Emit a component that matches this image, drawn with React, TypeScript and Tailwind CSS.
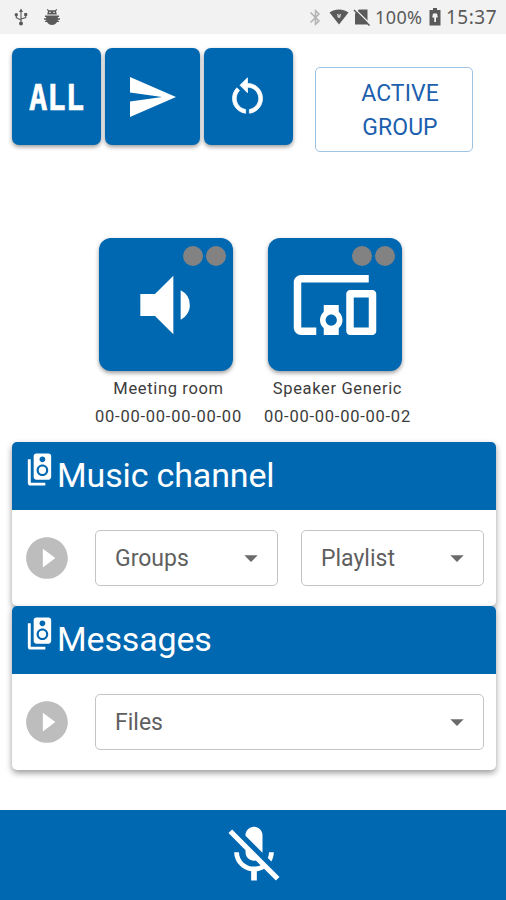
import type { ReactNode } from "react";
import {
  MdArrowDropDown,
  MdBluetooth,
  MdDevicesOther,
  MdMicOff,
  MdPlayCircleFilled,
  MdSpeakerGroup,
  MdVolumeDown,
} from "react-icons/md";

function StatusBar() {
  return (
    <header className="flex h-[34px] items-center bg-[#f2f2f2] pl-[14px] pr-[8px] text-[#5a5a5a]">
      <svg width="14" height="18" viewBox="0 0 14 18" fill="none" stroke="currentColor" strokeWidth="1.1">
        <path d="M7 3v12M2.3 7.5v2.2L7 12M11.7 7.5v2L7 11" />
        <path d="M7 .5 9 4H5zM10.2 5h3v3h-3z" fill="currentColor" stroke="none" />
        <circle cx="2.3" cy="6.7" r="1.7" fill="currentColor" stroke="none" />
        <circle cx="7" cy="15.4" r="2" fill="currentColor" stroke="none" />
      </svg>
      <svg className="ml-[16px]" width="16" height="18" viewBox="0 0 16 18" fill="currentColor">
        <path d="M3.5 1 5 2.3h6L12.5 1l.7.8L12 3.100l.8 3.400H3.200L4 3.100 2.800 1.800z" />
        <path d="M1 7.500h14V9h-1.200v1.200H16v1.500h-2.200v1.100H15v1.300h-2c-1 1.900-2.800 2.900-5 2.900s-4-1-5-2.900H1v-1.300h1.200v-1.100H0v-1.500h2.200V9H1z" />
        <path d="M5.300 3.800h1.300V5H5.300zM9.400 3.800h1.300V5H9.400z" fill="#f2f2f2" />
      </svg>
      <div className="ml-auto flex items-center">
        <MdBluetooth size={19} className="-ml-[2px] text-[#b4b4b4]" />
        <svg className="ml-[4px]" width="20" height="16" viewBox="0 0 20 16">
          <path d="M.5 3.500C6-.500 14-.500 19.500 3.500L10 15.500z" fill="currentColor" />
          <path d="M8 5h1.500v1.300h1V5H12v1.300h-.5V8L10.500 9h-1l-1-1V6.300H8z" fill="#cfcfcf" />
        </svg>
        <svg className="ml-[4px]" width="18" height="18" viewBox="0 0 18 18">
          <path d="M6 1.500h8.500v15H2V5.500z" fill="currentColor" />
          <path d="M2.500 1.500 18 17" stroke="#f2f2f2" strokeWidth="1.300" />
          <path d="M1 2 16.500 17.500" stroke="currentColor" strokeWidth="1.500" />
        </svg>
        <span className="ml-[4px] w-[50px] whitespace-nowrap font-['Noto_Sans'] text-[18px] leading-none tracking-[0.4px]">100%</span>
        <svg className="ml-[4px]" width="12" height="18" viewBox="0 0 12 18">
          <path d="M4 0h4v2h3.500v15.500H.5V2H4z" fill="currentColor" />
          <path d="M4 5.500h4l.8 4H7v4.500H5.200V9.500h-2z" fill="#f2f2f2" />
        </svg>
        <span className="ml-[5px] w-[52px] whitespace-nowrap font-['Noto_Sans'] text-[19px] leading-none tracking-[0.5px]">15:37</span>
      </div>
    </header>
  );
}

const TILE = "flex items-center justify-center bg-[#0067b1] text-white shadow-[0_2px_4px_rgba(0,0,0,0.4)]";

function Device({ name, mac, children }: { name: string; mac: string; children: ReactNode }) {
  return (
    <div className="flex w-[149px] flex-col items-center text-[#3c3c3c]">
      <button className={`${TILE} relative mr-[6px] h-[133px] w-[134px] rounded-[12px]`}>
        {children}
        <span className="absolute right-[7px] top-[8px] flex gap-[3px]">
          <i className="h-[20px] w-[20px] rounded-full bg-[#828282]" />
          <i className="h-[20px] w-[20px] rounded-full bg-[#828282]" />
        </span>
      </button>
      <span className="mt-[4px] whitespace-nowrap text-[16.5px] leading-[28px] tracking-[0.65px]">{name}</span>
      <span className="whitespace-nowrap text-[16.5px] leading-[28px] tracking-[0.75px]">{mac}</span>
    </div>
  );
}

function Select({ label }: { label: string }) {
  return (
    <button className="flex h-[56px] flex-1 items-center justify-between rounded-[5px] border border-[#c4c4c4] pl-[19px] pr-[10px] text-[23px] text-[#5f5f5f]">
      <span className="pt-[2px]">{label}</span>
      <MdArrowDropDown size={32} className="text-[#6b6b6b]" />
    </button>
  );
}

function Channel({ title, options }: { title: string; options: string[] }) {
  return (
    <section className="rounded-[5px] bg-white shadow-[0_3px_6px_rgba(0,0,0,0.4)]">
      <h2 className="flex h-[68px] rounded-t-[5px] bg-[#0067b1] pl-[10px] text-white">
        <MdSpeakerGroup size={35} className="mt-[10px]" />
        <span className="text-[34px] leading-[66px] tracking-[-0.15px]">{title}</span>
      </h2>
      <div className="flex h-[96px] items-center pl-[10px] pr-[12px]">
        <MdPlayCircleFilled size={50} className="text-[#bdbdbd]" />
        <div className="ml-[23px] flex flex-1 gap-[23px]">
          {options.map((o) => (
            <Select key={o} label={o} />
          ))}
        </div>
      </div>
    </section>
  );
}

export default function App() {
  return (
    <div className="flex h-[900px] w-[506px] flex-col overflow-hidden bg-white font-[Roboto,sans-serif]">
      <StatusBar />

      <div className="flex h-[204px] pl-[12px] pt-[14px]">
        <button className={`${TILE} h-[97px] w-[89px] rounded-[7px]`}>
          <span className="scale-x-[0.85] pt-[2px] font-['DejaVu_Sans_Mono',monospace] text-[36px] font-bold leading-none [-webkit-text-stroke:0.5px_white]">
            ALL
          </span>
        </button>
        <button className={`${TILE} ml-[4px] h-[97px] w-[95px] rounded-[7px]`}>
          <svg width="46" height="40" viewBox="0 0 46 40" fill="currentColor">
            <path d="M0 0 46 20 0 40V24.5L32 20 0 15.5z" />
          </svg>
        </button>
        <button className={`${TILE} ml-[4px] h-[97px] w-[89px] rounded-[7px] pr-[2px]`}>
          <svg width="45" height="45" viewBox="0 0 24 24" fill="currentColor" stroke="currentColor" strokeWidth="0.4">
            <path d="M12 5V2L8 6l4 4V7c3.31 0 6 2.69 6 6 0 2.970-2.170 5.430-5 5.910v2.020c3.950-.490 7-3.850 7-7.930 0-4.420-3.580-8-8-8z" />
            <path d="M6 13c0-1.650.67-3.150 1.760-4.240L6.340 7.340C4.900 8.790 4 10.790 4 13c0 4.080 3.050 7.440 7 7.930v-2.020c-2.830-.480-5-2.940-5-5.910z" />
          </svg>
        </button>
        <button className="ml-[22px] mt-[19px] h-[85px] w-[158px] rounded-[5px] border border-[#9fc3e4] pl-[12px] pt-[2px] text-[23px] leading-[34px] tracking-[0.05px] text-[#1c5fae]">
          ACTIVE
          <br />
          GROUP
        </button>
      </div>

      <div className="flex gap-[20px] pl-[94px]">
        <Device name="Meeting room" mac="00-00-00-00-00-00">
          <MdVolumeDown size={88} />
        </Device>
        <Device name="Speaker Generic" mac="00-00-00-00-00-02">
          <MdDevicesOther size={90} />
        </Device>
      </div>

      <main className="mx-[12px] mt-[11px] w-[484px]">
        <Channel title="Music channel" options={["Groups", "Playlist"]} />
        <Channel title="Messages" options={["Files"]} />
      </main>

      <footer className="mt-auto flex h-[90px] items-center justify-center bg-[#0067b1] pl-[2px] text-white">
        <MdMicOff size={68} />
      </footer>
    </div>
  );
}
